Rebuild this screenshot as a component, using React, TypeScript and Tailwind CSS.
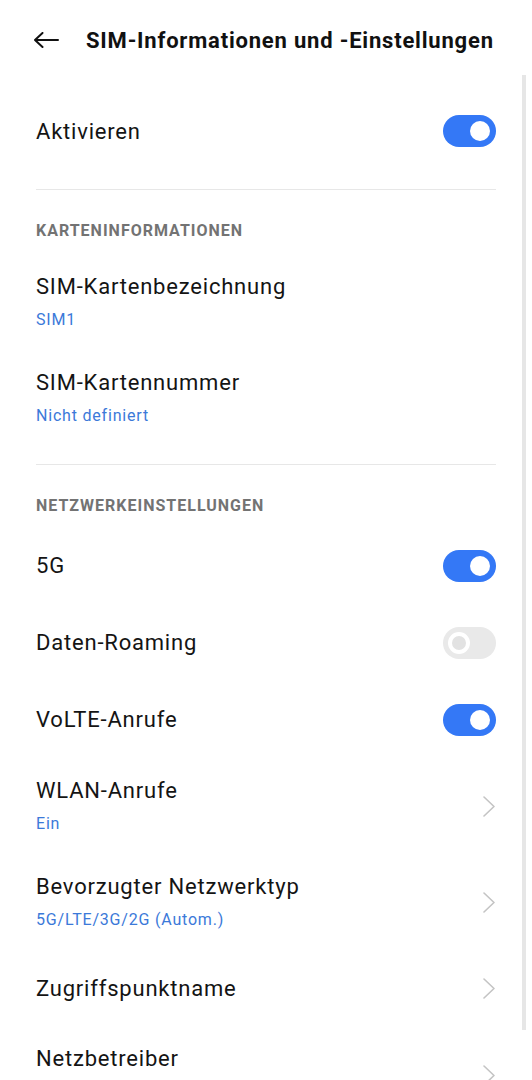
import React from 'react';

type Row =
  | { kind: 'toggle'; label: string; on: boolean; disabled?: boolean }
  | { kind: 'link'; label: string; sub?: string; tall?: boolean }
  | { kind: 'info'; label: string; sub: string };

const Toggle: React.FC<{ on: boolean; disabled?: boolean }> = ({ on, disabled }) => {
  if (disabled) {
    return (
      <div className="w-[53px] h-[32px] rounded-full bg-[#e9e9e9] flex items-center pl-[5px]">
        <div className="w-[22px] h-[22px] rounded-full border-[4px] border-white bg-[#e2e2e2]" />
      </div>
    );
  }
  return (
    <div
      className={
        on
          ? 'w-[53px] h-[32px] rounded-full bg-[#3478f6] flex items-center justify-end pr-[6px]'
          : 'w-[53px] h-[32px] rounded-full bg-[#d9d9d9] flex items-center pl-[6px]'
      }
    >
      <div className="w-[20px] h-[20px] rounded-full bg-white" />
    </div>
  );
};

const Chevron = () => (
  <svg width="12" height="21" viewBox="0 0 12 21" fill="none">
    <path d="M1 1l10 9.5L1 20" stroke="#c4c4c4" strokeWidth="1.6" strokeLinecap="round" strokeLinejoin="round" />
  </svg>
);

const SectionHeader: React.FC<{ title: string }> = ({ title }) => (
  <div className="mt-[31px] h-[20px] flex items-center text-[16px] font-bold tracking-[1px] text-[#737373]">{title}</div>
);

const Divider = () => <div className="h-px bg-[#e7e7e7]" />;

const SettingRow: React.FC<{ row: Row }> = ({ row }) => {
  if (row.kind === 'toggle') {
    return (
      <div className="h-[77px] flex items-center justify-between">
        <span className="text-[22px] tracking-[0.8px] text-[#141414]">{row.label}</span>
        <Toggle on={row.on} disabled={row.disabled} />
      </div>
    );
  }
  const sub = row.sub;
  const tall = Boolean(sub) || (row.kind === 'link' && row.tall);
  return (
    <div className={tall ? 'h-[96px] flex items-center justify-between' : 'h-[77px] flex items-center justify-between'}>
      <div className={tall && !sub ? 'flex flex-col self-start pt-[18px]' : 'flex flex-col'}>
        <span className="text-[22px] leading-[28px] tracking-[0.8px] text-[#141414]">{row.label}</span>
        {sub && <span className="mt-[8px] text-[16px] leading-[22px] tracking-[0.8px] text-[#3b79d9]">{sub}</span>}
      </div>
      {row.kind === 'link' && (
        <div className="pr-[1px]">
          <Chevron />
        </div>
      )}
    </div>
  );
};

const cardRows: Row[] = [
  { kind: 'info', label: 'SIM-Kartenbezeichnung', sub: 'SIM1' },
  { kind: 'info', label: 'SIM-Kartennummer', sub: 'Nicht definiert' },
];

const networkRows: Row[] = [
  { kind: 'toggle', label: '5G', on: true },
  { kind: 'toggle', label: 'Daten-Roaming', on: false, disabled: true },
  { kind: 'toggle', label: 'VoLTE-Anrufe', on: true },
  { kind: 'link', label: 'WLAN-Anrufe', sub: 'Ein' },
  { kind: 'link', label: 'Bevorzugter Netzwerktyp', sub: '5G/LTE/3G/2G (Autom.)' },
  { kind: 'link', label: 'Zugriffspunktname' },
  { kind: 'link', label: 'Netzbetreiber', tall: true },
];

export default function App() {
  return (
    <div
      className="relative w-[532px] h-[1080px] overflow-hidden bg-white"
      style={{ fontFamily: 'Roboto, "Noto Sans", sans-serif' }}
    >
      {/* Header */}
      <div className="h-[80px] flex items-center pl-[34px]">
        <svg width="25" height="16" viewBox="0 0 25 16" fill="none">
          <path d="M1 8h23M8.5 1L1 8l7.5 7" stroke="#111" strokeWidth="2" strokeLinecap="round" strokeLinejoin="round" />
        </svg>
        <h1 className="ml-[27px] text-[22px] font-bold text-[#111] tracking-[0.8px]">SIM-Informationen und -Einstellungen</h1>
      </div>

      <div className="px-[36px]">
        <div className="h-[102px] flex items-center justify-between">
          <span className="text-[22px] tracking-[0.8px] text-[#141414]">Aktivieren</span>
          <Toggle on />
        </div>
        <div className="mt-[7px]">
          <Divider />
        </div>

        <SectionHeader title="KARTENINFORMATIONEN" />
        <div className="mt-[13px]">
          {cardRows.map((r) => (
            <SettingRow key={r.label} row={r} />
          ))}
        </div>
        <div className="mt-[18px]">
          <Divider />
        </div>

        <SectionHeader title="NETZWERKEINSTELLUNGEN" />
        <div className="mt-[11px]">
          {networkRows.map((r) => (
            <SettingRow key={r.label} row={r} />
          ))}
        </div>
      </div>

      {/* scrollbar */}
      <div className="absolute right-[6px] top-[75px] w-[4px] h-[955px] bg-[#e6e6e6]" />
    </div>
  );
}
